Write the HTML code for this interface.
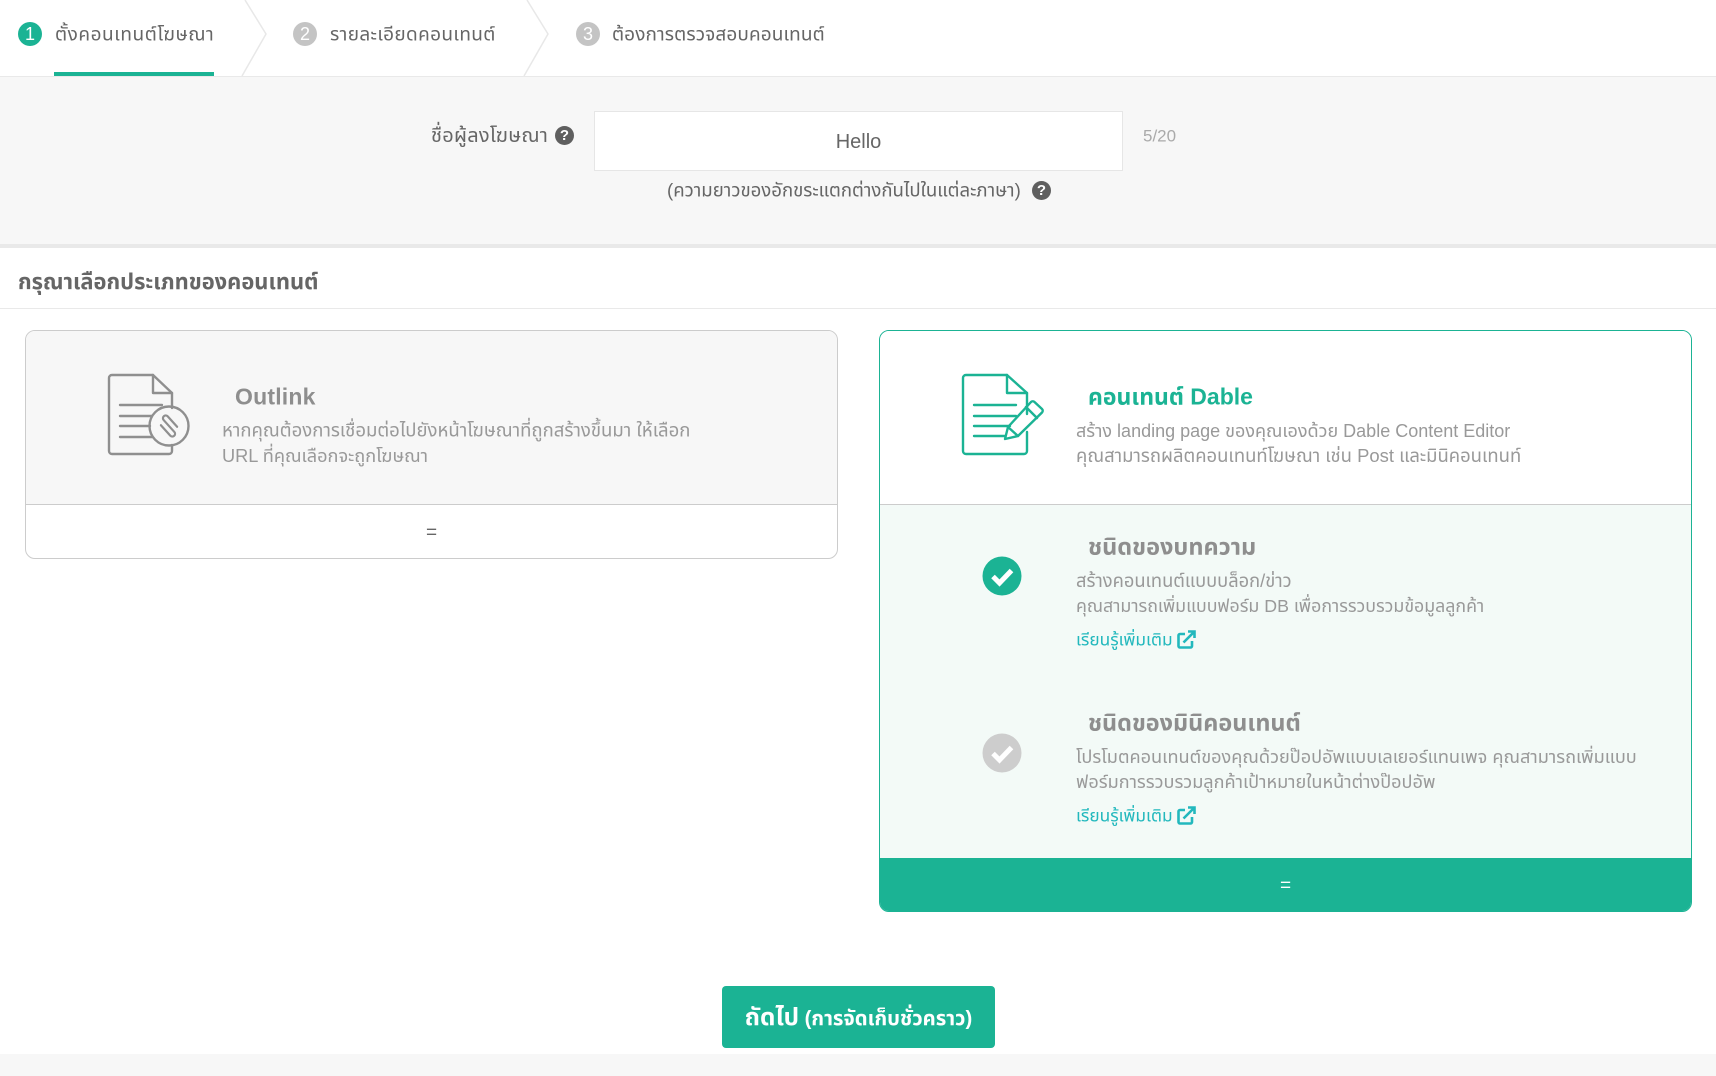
<!DOCTYPE html>
<html lang="th">
<head>
<meta charset="utf-8">
<title>Dable</title>
<style>
html,body{margin:0;padding:0;background:#fff}
body{width:1716px;height:1076px;position:relative;overflow:hidden;font-family:"Liberation Sans","Noto Sans Thai","Noto Sans","Noto Sans CJK SC",sans-serif;color:#666}
.a{position:absolute;white-space:nowrap}
.t{transform:translateY(-50%);line-height:1}
.num{width:24px;height:24px;border-radius:50%;background:#c4c4c4;color:#fff;font-size:18px;line-height:24px;text-align:center;top:22px}
.step{font-size:19px;top:34.5px;color:#666}
.q{width:19px;height:19px;border-radius:50%;background:#5f5f5f;color:#fff;font-size:15px;font-weight:bold;line-height:19px;text-align:center}
.desc{font-size:18px;color:#999}
.h{font-size:23px;font-weight:bold;color:#8e8e8e}
.link{font-size:17.3px;color:#22b8bd}
</style>
</head>
<body>
<!-- steps -->
<div class="a num" style="left:18px;background:#1bb394">1</div>
<div class="a t step" style="left:55px;letter-spacing:.55px">ตั้งคอนเทนต์โฆษณา</div>
<div class="a" style="left:54px;top:72px;width:160px;height:4px;background:#1bb394"></div>
<div class="a num" style="left:293px">2</div>
<div class="a t step" style="left:330px;letter-spacing:.36px">รายละเอียดคอนเทนต์</div>
<div class="a num" style="left:576px">3</div>
<div class="a t step" style="left:612px;letter-spacing:.1px">ต้องการตรวจสอบคอนเทนต์</div>
<svg class="a" style="left:0;top:0" width="700" height="77"><path d="M245 0L266 34L242 76M527 0L548 34L524 76" fill="none" stroke="#e8e8e8" stroke-width="1.5"/></svg>

<!-- name section -->
<div class="a" style="left:0;top:76px;width:1716px;height:168px;background:#f7f7f7;border-top:1px solid #e9e9e9;box-sizing:border-box"></div>
<div class="a" style="left:0;top:244px;width:1716px;height:4px;background:#e9e9e9"></div>
<div class="a t" style="left:431px;top:136px;font-size:20px;letter-spacing:.25px;color:#666">ชื่อผู้ลงโฆษณา</div>
<div class="a q" style="left:555px;top:126px">?</div>
<div class="a" style="left:594px;top:111px;width:529px;height:60px;background:#fff;border:1px solid #e6e6e6;box-sizing:border-box"></div>
<div class="a t" style="left:594px;width:529px;top:142px;text-align:center;font-size:20px;color:#666">Hello</div>
<div class="a t" style="left:1143px;top:136px;font-size:17px;color:#aaa">5/20</div>
<div class="a t" style="left:667px;top:191px;font-size:18.6px;color:#666">(ความยาวของอักขระแตกต่างกันไปในแต่ละภาษา)</div>
<div class="a q" style="left:1032px;top:181px">?</div>

<!-- title -->
<div class="a t" style="left:18px;top:282px;font-size:21.9px;font-weight:bold;color:#666">กรุณาเลือกประเภทของคอนเทนต์</div>
<div class="a" style="left:0;top:308px;width:1716px;height:1px;background:#e9e9e9"></div>

<!-- left card -->
<div class="a" style="left:25px;top:330px;width:813px;height:229px;border:1px solid #ccc;border-radius:10px;box-sizing:border-box;overflow:hidden;background:#fff">
  <div style="height:173px;background:#f7f7f7;border-bottom:1px solid #ccc"></div>
</div>
<svg class="a" style="left:100px;top:366px" width="100" height="96" viewBox="100 366 100 96" fill="none" stroke="#8f8f8f" stroke-width="2.4" stroke-linecap="round" stroke-linejoin="round">
  <path d="M172 408V393L153 375H112a3 3 0 0 0-3 3V451a3 3 0 0 0 3 3H169a3 3 0 0 0 3-3V445"/>
  <path d="M153 375V393H172"/>
  <path d="M120 405H162M120 416H152M120 426H150M120 437H152"/>
  <circle cx="169" cy="426" r="19.5"/>
  <path stroke-width="2.2" transform="translate(169 426) rotate(48)" d="M6-5.500H-8A2.750 2.750 0 0 0-8 0H8A2.750 2.750 0 0 1 8 5.500H-6"/>
</svg>
<div class="a t h" style="left:235px;top:397px;letter-spacing:.2px">Outlink</div>
<div class="a t desc" style="left:222px;top:431px;font-size:18.56px">หากคุณต้องการเชื่อมต่อไปยังหน้าโฆษณาที่ถูกสร้างขึ้นมา ให้เลือก</div>
<div class="a t desc" style="left:222px;top:456px;font-size:18.2px">URL ที่คุณเลือกจะถูกโฆษณา</div>
<div class="a t" style="left:25px;width:813px;top:533px;text-align:center;font-size:19px;color:#666">=</div>

<!-- right card -->
<div class="a" style="left:879px;top:330px;width:813px;height:582px;border:1px solid #1bb394;border-radius:10px;box-sizing:border-box;overflow:hidden;background:#fff">
  <div style="height:173px;background:#fff;border-bottom:1px solid #ccc"></div>
  <div style="height:353px;background:#f3faf7"></div>
  <div style="height:55px;background:#1bb394"></div>
</div>
<svg class="a" style="left:955px;top:366px" width="96" height="96" viewBox="955 366 96 96" fill="none" stroke="#1bb394" stroke-width="2.4" stroke-linecap="round" stroke-linejoin="round">
  <path d="M1027 414V393L1007 375H966a3 3 0 0 0-3 3V451a3 3 0 0 0 3 3H1024a3 3 0 0 0 3-3V432"/>
  <path d="M1007 375V393H1027"/>
  <path d="M974 405H1016M974 416H1016M974 426H1010M974 436H1005"/>
  <path d="M1008 427L1031 402a2.5 2.5 0 0 1 3.5 0L1042 409a2.5 2.5 0 0 1 0 3.5L1018 436L1005 439Z"/>
  <path d="M1026 407L1037 418M1008 427L1018 436"/>
</svg>
<div class="a t h" style="left:1088px;top:397px;color:#1bb394">คอนเทนต์ Dable</div>
<div class="a t desc" style="left:1076px;top:431px">สร้าง landing page ของคุณเองด้วย Dable Content Editor</div>
<div class="a t desc" style="left:1076px;top:456px;font-size:18.45px">คุณสามารถผลิตคอนเทนท์โฆษณา เช่น Post และมินิคอนเทนท์</div>

<svg class="a" style="left:982px;top:556px" width="40" height="40"><circle cx="20" cy="20" r="19.5" fill="#1bb394"/><path d="M11 20.5L17.5 27L29.500 14.5" fill="none" stroke="#fff" stroke-width="5"/></svg>
<div class="a t h" style="left:1088px;top:547px;font-size:23.5px">ชนิดของบทความ</div>
<div class="a t desc" style="left:1076px;top:581px;font-size:18.3px">สร้างคอนเทนต์แบบบล็อก/ข่าว</div>
<div class="a t desc" style="left:1076px;top:607px;font-size:17.78px">คุณสามารถเพิ่มแบบฟอร์ม DB เพื่อการรวบรวมข้อมูลลูกค้า</div>
<div class="a t link" style="left:1076px;top:640px">เรียนรู้เพิ่มเติม</div>
<svg class="a" style="left:1177px;top:630px" width="19" height="19" fill="none" stroke="#22b8bd" stroke-width="2.6"><path d="M8 4H3a1.5 1.5 0 0 0-1.5 1.5V16a1.5 1.5 0 0 0 1.500 1.5H13.5A1.5 1.5 0 0 0 15 16V11"/><path d="M6.5 12.5L16.5 2.5M11 1.5H17.5V8"/></svg>

<svg class="a" style="left:982px;top:733px" width="40" height="40"><circle cx="20" cy="20" r="19.5" fill="#cdcdcd"/><path d="M11 20.5L17.5 27L29.5 14.5" fill="none" stroke="#fff" stroke-width="5"/></svg>
<div class="a t h" style="left:1088px;top:723px;font-size:23.4px">ชนิดของมินิคอนเทนต์</div>
<div class="a t desc" style="left:1076px;top:757px;font-size:18.15px">โปรโมตคอนเทนต์ของคุณด้วยป๊อปอัพแบบเลเยอร์แทนเพจ คุณสามารถเพิ่มแบบ</div>
<div class="a t desc" style="left:1076px;top:782px;font-size:18.13px">ฟอร์มการรวบรวมลูกค้าเป้าหมายในหน้าต่างป๊อปอัพ</div>
<div class="a t link" style="left:1076px;top:816px">เรียนรู้เพิ่มเติม</div>
<svg class="a" style="left:1177px;top:806px" width="19" height="19" fill="none" stroke="#22b8bd" stroke-width="2.6"><path d="M8 4H3a1.5 1.5 0 0 0-1.5 1.5V16a1.5 1.5 0 0 0 1.5 1.5H13.5A1.5 1.5 0 0 0 15 16V11"/><path d="M6.5 12.5L16.5 2.5M11 1.5H17.5V8"/></svg>
<div class="a t" style="left:879px;width:813px;top:886px;text-align:center;font-size:19px;color:#fff">=</div>

<!-- button -->
<div class="a" style="left:722px;top:986px;width:273px;height:62px;background:#1bb394;border-radius:4px"></div>
<div class="a t" style="left:722px;width:273px;top:1018px;text-align:center;color:#fff;font-weight:bold;font-size:20.3px"><span style="font-size:24.3px">ถัดไป</span> (การจัดเก็บชั่วคราว)</div>
<div class="a" style="left:0;top:1054px;width:1716px;height:22px;background:#f7f7f7"></div>
</body>
</html>
